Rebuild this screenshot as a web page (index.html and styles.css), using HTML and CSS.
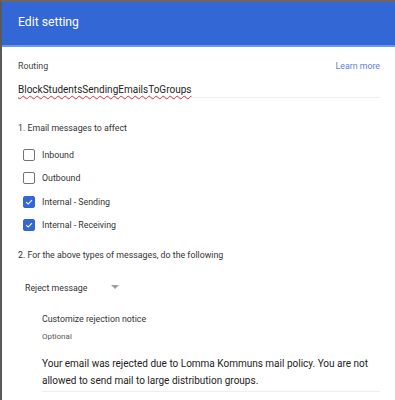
FILE: index.html
```html
<!DOCTYPE html>
<html lang="en">
<head>
    <meta charset="UTF-8">
    <meta name="viewport" content="width=device-width, initial-scale=1.0">
    <title>Edit setting</title>
    <link rel="stylesheet" href="styles.css">
</head>
<body>
    <div class="dialog">
        <div class="dialog-header">
            <h1>Edit setting</h1>
        </div>

        <div class="dialog-body">
            <div class="field-head">
                <span class="field-label">Routing</span>
                <a href="#" class="learn-more">Learn more</a>
            </div>
            <div class="text-input">
                <span class="misspelled">BlockStudentsSendingEmailsToGroups</span>
            </div>

            <div class="section-title">1. Email messages to affect</div>
            <div class="checklist">
                <label class="check-row">
                    <span class="checkbox"></span>
                    <span>Inbound</span>
                </label>
                <label class="check-row">
                    <span class="checkbox"></span>
                    <span>Outbound</span>
                </label>
                <label class="check-row">
                    <span class="checkbox checked">
                        <svg viewBox="0 0 12 12" width="12" height="12"><path d="M2.6 6.2 L5 8.5 L9.6 3.8" fill="none" stroke="#fff" stroke-width="1.3"/></svg>
                    </span>
                    <span>Internal - Sending</span>
                </label>
                <label class="check-row">
                    <span class="checkbox checked">
                        <svg viewBox="0 0 12 12" width="12" height="12"><path d="M2.6 6.2 L5 8.5 L9.6 3.8" fill="none" stroke="#fff" stroke-width="1.3"/></svg>
                    </span>
                    <span>Internal - Receiving</span>
                </label>
            </div>

            <div class="section-title second">2. For the above types of messages, do the following</div>
            <div class="select">
                <span>Reject message</span>
                <span class="select-arrow"></span>
            </div>

            <div class="notice">
                <div class="notice-title">Customize rejection notice</div>
                <div class="notice-hint">Optional</div>
                <div class="notice-text">Your email was rejected due to Lomma Kommuns mail policy. You are not allowed to send mail to large distribution groups.</div>
            </div>
        </div>
    </div>
</body>
</html>
```

FILE: styles.css
```css
* {
    margin: 0;
    padding: 0;
    box-sizing: border-box;
}

body {
    font-family: Roboto, 'Liberation Sans', Arial, sans-serif;
    background: #fff;
    color: #333;
}

.dialog {
    height: 400px;
    border-left: 2px solid #5a5a5a;
    border-top: 2px solid #6b6660;
    background: #fff;
    overflow: hidden;
}

.dialog-header {
    background: #3367d6;
    height: 45px;
    border-bottom: 2px solid #6d9af0;
    display: flex;
    align-items: center;
    padding-left: 16px;
}

.dialog-header h1 {
    color: #fff;
    font-size: 12.2px;
    font-weight: 400;
    margin-top: -3px;
}

.dialog-body {
    padding: 0 15px 0 16px;
}

.field-head {
    display: flex;
    justify-content: space-between;
    align-items: center;
    margin-top: 13px;
    height: 12px;
}

.field-label {
    font-size: 8.8px;
    color: #444;
}

.learn-more {
    font-size: 8.8px;
    color: #5b7fdb;
    text-decoration: none;
}

.text-input {
    margin-top: 12px;
    padding-bottom: 2px;
    border-bottom: 1px solid #eceff1;
    font-size: 10px;
    color: #222;
}

.misspelled {
    text-decoration: underline wavy #e03030;
    text-decoration-thickness: 1px;
    text-underline-offset: 2px;
}

.section-title {
    font-size: 8.8px;
    color: #333;
    margin-top: 25px;
}

.section-title.second {
    margin-top: 19px;
}

.checklist {
    margin-top: 16px;
    padding-left: 5px;
    display: flex;
    flex-direction: column;
    gap: 11.4px;
}

.check-row {
    display: flex;
    align-items: center;
    gap: 7px;
    font-size: 8.8px;
    color: #333;
    height: 12px;
}

.checkbox {
    width: 12px;
    height: 12px;
    border: 1.5px solid #737373;
    border-radius: 2px;
    display: flex;
    align-items: center;
    justify-content: center;
}

.checkbox.checked {
    background: #3367d6;
    border-color: #3367d6;
}

.select {
    margin-top: 23px;
    margin-left: 7px;
    display: flex;
    align-items: center;
    gap: 24px;
    font-size: 8.8px;
    color: #333;
}

.select-arrow {
    width: 0;
    height: 0;
    border-left: 4px solid transparent;
    border-right: 4px solid transparent;
    border-top: 4px solid #9e9e9e;
    margin-top: -2px;
}

.notice {
    margin-left: 24px;
    margin-top: 21px;
}

.notice-title {
    font-size: 8.8px;
    color: #333;
}

.notice-hint {
    font-size: 8px;
    color: #555;
    margin-top: 8px;
}

.notice-text {
    font-size: 10px;
    line-height: 17px;
    color: #222;
    margin-top: 14px;
    padding-bottom: 2px;
    border-bottom: 1px solid #eceff1;
}
```
